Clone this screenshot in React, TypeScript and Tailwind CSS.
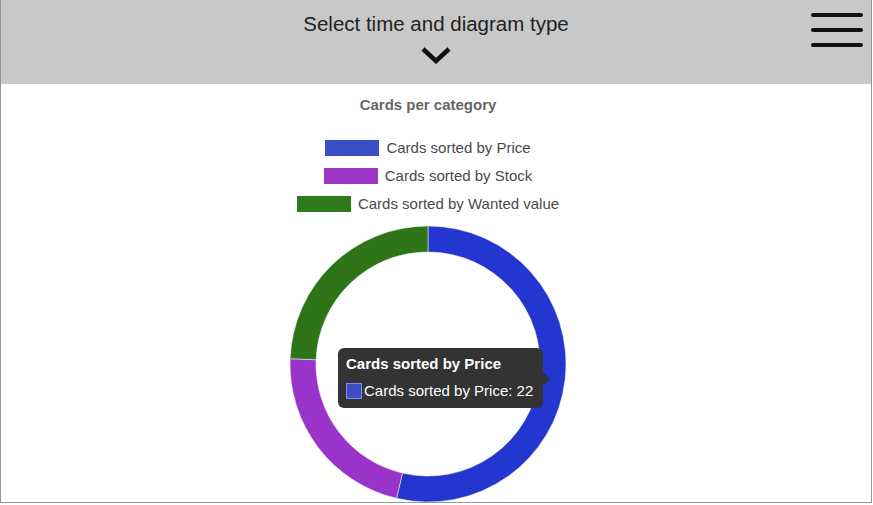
import React from "react";

const CX = 140;
const CY = 140;
const RO = 138;
const RI = 112;

function pt(r: number, deg: number) {
  const a = (deg * Math.PI) / 180;
  return [CX + r * Math.sin(a), CY - r * Math.cos(a)];
}

function arc(a0: number, a1: number) {
  const large = a1 - a0 > 180 ? 1 : 0;
  const [x0, y0] = pt(RO, a0);
  const [x1, y1] = pt(RO, a1);
  const [x2, y2] = pt(RI, a1);
  const [x3, y3] = pt(RI, a0);
  return `M${x0} ${y0} A${RO} ${RO} 0 ${large} 1 ${x1} ${y1} L${x2} ${y2} A${RI} ${RI} 0 ${large} 0 ${x3} ${y3} Z`;
}

const data = [
  { label: "Cards sorted by Price", value: 22, ring: "#2336cf", box: "#3a4fc4" },
  { label: "Cards sorted by Stock", value: 9, ring: "#9a33c9", box: "#9b35c6" },
  { label: "Cards sorted by Wanted value", value: 10, ring: "#2f7419", box: "#2f7a1c" },
];

export default function App() {
  const total = data.reduce((s, d) => s + d.value, 0);
  let acc = 0;
  const segs = data.map((d) => {
    const a0 = (acc / total) * 360;
    acc += d.value;
    const a1 = (acc / total) * 360;
    return { ...d, path: arc(a0, a1) };
  });

  return (
    <div
      className="w-[872px] h-[503px] overflow-hidden border-x border-b border-[#8a9aa8] bg-white flex flex-col"
      style={{ fontFamily: '"Liberation Sans", Arial, sans-serif' }}
    >
      <header className="relative h-[84px] shrink-0 bg-[#c8c8c8] flex flex-col items-center">
        <div className="mt-[12px] text-[20.5px] leading-[24px] text-[#222]">Select time and diagram type</div>
        <svg className="mt-[10px]" width="32" height="18" viewBox="0 0 32 18">
          <path d="M3 3 L16 15 L29 3" fill="none" stroke="#111" strokeWidth="4.5" strokeLinecap="butt" />
        </svg>
        <div className="absolute right-[8px] top-[13px] flex flex-col gap-[11px]">
          <div className="w-[52px] h-[4px] rounded-full bg-[#111]" />
          <div className="w-[52px] h-[4px] rounded-full bg-[#111]" />
          <div className="w-[52px] h-[4px] rounded-full bg-[#111]" />
        </div>
      </header>

      <main className="flex flex-col items-center pr-[16px]">
        <div className="mt-[12px] text-[15px] leading-[18px] font-bold text-[#666]">Cards per category</div>
        <div className="mt-[26px] flex flex-col items-center gap-[12px]">
          {data.map((d) => (
            <div key={d.label} className="flex items-center gap-[7px] h-[16px]">
              <div className="w-[54px] h-[16px]" style={{ background: d.box }} />
              <span className="text-[15px] leading-[16px] text-[#4a4a4a]">{d.label}</span>
            </div>
          ))}
        </div>
        <div className="relative mt-[12px] w-[280px] h-[280px]">
          <svg width="280" height="280" viewBox="0 0 280 280">
            {segs.map((s) => (
              <path key={s.label} d={s.path} fill={s.ring} stroke="#fff" strokeWidth="0.5" />
            ))}
          </svg>
          <div className="absolute left-[50px] top-[124px] w-[205px] h-[60px] rounded-[6px] bg-[#333333] px-[8px] pt-[7px]">
            <div className="text-[15px] leading-[18px] font-bold text-white">Cards sorted by Price</div>
            <div className="mt-[9px] flex items-center gap-[2px]">
              <div className="w-[16px] h-[16px] border border-[#7f8ee0] bg-[#3a4fc4]" />
              <span className="text-[15px] leading-[18px] text-white">Cards sorted by Price: 22</span>
            </div>
            <div className="absolute right-[-7px] top-[24px] w-0 h-0 border-y-[7px] border-y-transparent border-l-[7px] border-l-[#333333]" />
          </div>
        </div>
      </main>
    </div>
  );
}
